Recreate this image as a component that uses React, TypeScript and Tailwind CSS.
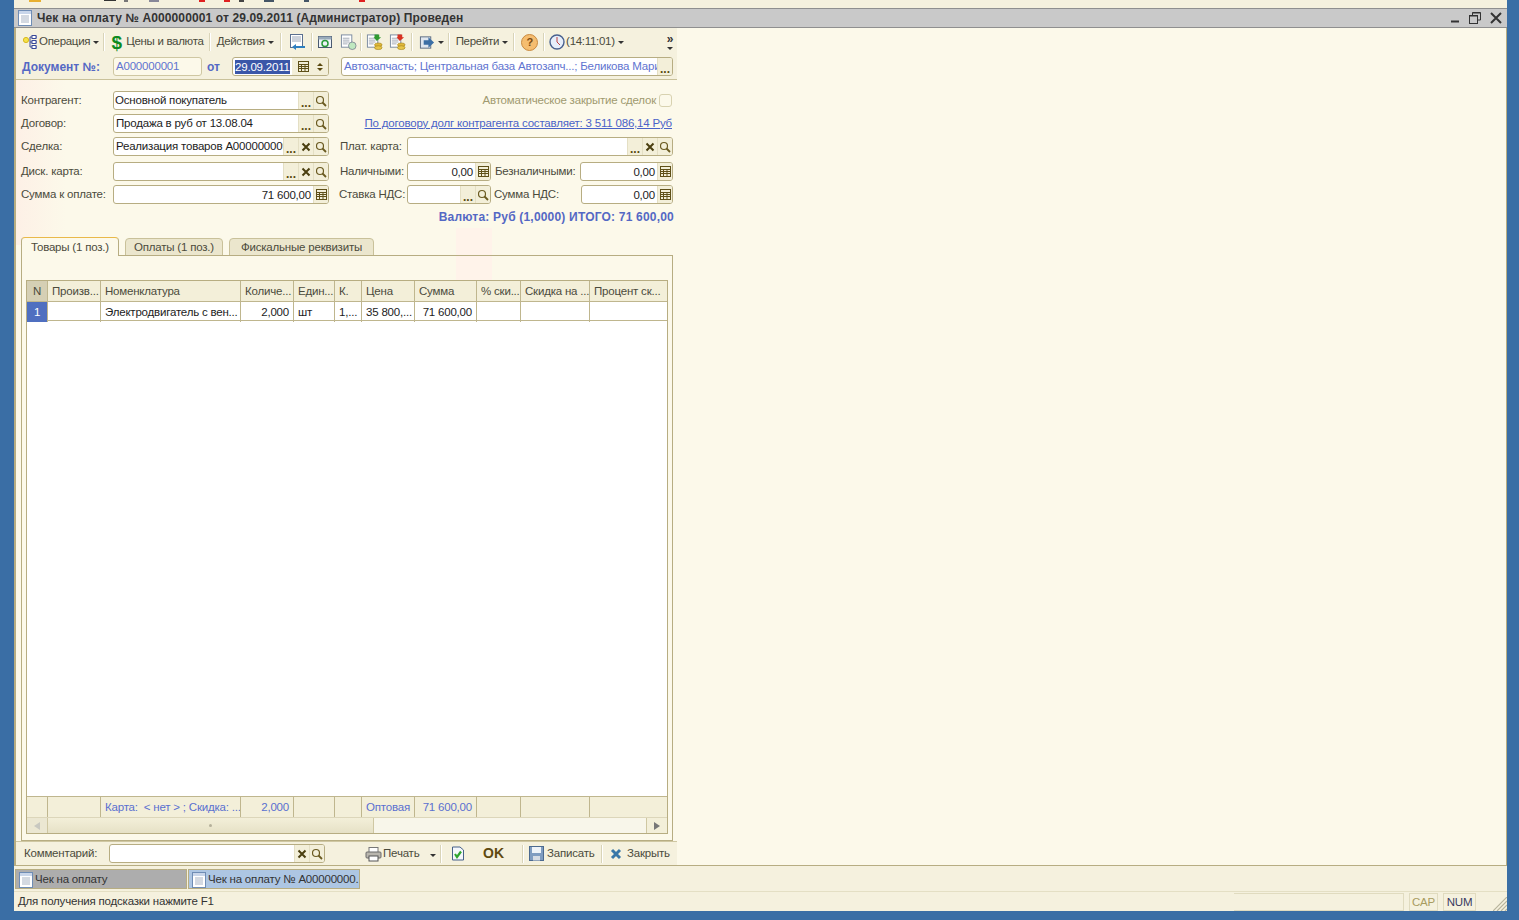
import React from "react";

const font = { fontFamily: '"Liberation Sans", Arial, sans-serif' };

function Dots() {
  return <span className="block w-[13px] text-center text-[12px] font-bold leading-[8px] tracking-[0px] text-[#5a4a10] pt-[5px]">...</span>;
}
function XIcon() {
  return (
    <svg width="10" height="10" viewBox="0 0 10 10">
      <path d="M1.5 1.5 L8.5 8.5 M8.5 1.5 L1.5 8.5" stroke="#4a3f10" strokeWidth="2" />
    </svg>
  );
}
function Lens() {
  return (
    <svg width="12" height="12" viewBox="0 0 12 12" fill="none">
      <circle cx="5" cy="5" r="3.5" stroke="#6a5a20" strokeWidth="1.2" />
      <path d="M7.5 7.5 L11 11" stroke="#6a5a20" strokeWidth="1.8" />
    </svg>
  );
}
function Calc() {
  return (
    <svg width="11" height="11" viewBox="0 0 11 11" fill="none" stroke="#5f5018">
      <rect x="0.5" y="0.5" width="10" height="10" />
      <path d="M0.5 3.5H10.5M0.5 5.5H10.5M0.5 7.5H10.5M3.5 3.5V10.5M7 3.5V10.5" />
    </svg>
  );
}
type Btn = "dots" | "x" | "lens" | "calc";
function Button({ kind }: { kind: Btn }) {
  return (
    <span className="flex h-full w-[15px] shrink-0 items-center justify-center border-l border-[#e4dfc4] bg-[#f3efd9]">
      {kind === "dots" && <Dots />}
      {kind === "x" && <XIcon />}
      {kind === "lens" && <Lens />}
      {kind === "calc" && <Calc />}
    </span>
  );
}
function Field({ w, value, right, buttons, pl = "pl-[2px]", low }: { w: string; value?: string; right?: boolean; buttons: Btn[]; pl?: string; low?: boolean }) {
  return (
    <div className={`${w} flex h-[19px] shrink-0 overflow-hidden rounded-[3px] border border-[#b7ad82] bg-white`}>
      <span className={`min-w-0 flex-1 overflow-hidden whitespace-nowrap text-[11.5px] ${low ? "leading-[19px]" : "leading-[17px]"} text-[#1c1c1c] ${right ? "pr-[2px] text-right" : pl}`}>{value}</span>
      {buttons.map((b, i) => (
        <Button key={i} kind={b} />
      ))}
    </div>
  );
}
function Label({ w, children, low }: { w: string; children: React.ReactNode; low?: boolean }) {
  return <span className={`${w} shrink-0 whitespace-nowrap text-[11.5px] ${low ? "leading-[19px]" : "leading-[17px]"} text-[#4b4b3c]`}>{children}</span>;
}
function Sep({ m = "mx-[4px]" }: { m?: string }) {
  return <span className={`${m} h-[18px] w-[2px] shrink-0 border-l border-r border-l-[#d9d4b8] border-r-white`} />;
}
function Caret() {
  return <span className="ml-[3px] inline-block h-0 w-0 shrink-0 border-x-[3px] border-t-[3px] border-x-transparent border-t-[#333]" />;
}
function DocIcon() {
  return (
    <svg width="14" height="16" viewBox="0 0 14 16" className="shrink-0">
      <rect x="0.5" y="0.5" width="13" height="15" fill="#fff" stroke="#6f8db5" />
      <rect x="1" y="1" width="12" height="3" fill="#c9d6ea" />
      <path d="M3 6H11M3 8H11M3 10H11M3 12H11" stroke="#a9b4c4" />
    </svg>
  );
}
function ToolDoc({ accent, coins, arrow }: { accent: string; coins?: boolean; arrow?: string }) {
  return (
    <svg width="17" height="18" viewBox="0 0 18 18" className="shrink-0">
      <rect x="1.5" y="1.5" width="11" height="13" fill="#fff" stroke="#7a8aa0" />
      <path d="M3 5H10M3 7H10M3 9H10M3 11H8" stroke="#a0a8b5" />
      {arrow && <path d="M9 1H14V4H16L11.5 8L8 4H9Z" fill={arrow} />}
      {coins && <ellipse cx="13" cy="12" rx="4" ry="2" fill="#e0b83a" stroke="#9a7a10" strokeWidth="0.6" />}
      {coins && <ellipse cx="13" cy="15" rx="4" ry="2" fill="#e8c64a" stroke="#9a7a10" strokeWidth="0.6" />}
      {!coins && <circle cx="13" cy="13" r="4" fill={accent} stroke="#557" strokeWidth="0.6" />}
    </svg>
  );
}
function TopToolbar() {
  return (
    <div className="flex h-[26px] items-center pl-[6px] pt-[2px] text-[11.5px] tracking-[-0.3px] text-[#4b4b3c]">
      <svg width="17" height="16" viewBox="0 0 17 16" className="shrink-0">
        <circle cx="4" cy="6" r="2.6" fill="#f5e34a" stroke="#d8b820" />
        <path d="M8 3H15M8 8H15M8 13H15M8 3V13" stroke="#3a4a9a" />
        <rect x="10" y="1.5" width="4" height="3" fill="#fff" stroke="#3a4a9a" />
        <rect x="10" y="6.5" width="4" height="3" fill="#fff" stroke="#3a4a9a" />
        <rect x="10" y="11.5" width="4" height="3" fill="#fff" stroke="#3a4a9a" />
      </svg>
      <span className="whitespace-nowrap">Операция</span>
      <Caret />
      <Sep m="ml-[4px] mr-[4px]" />
      <span className="w-[15px] shrink-0 text-center text-[19px] font-bold leading-none tracking-normal text-[#0d8a1f]">$</span>
      <span className="ml-[2px] whitespace-nowrap">Цены и валюта</span>
      <Sep m="ml-[5px] mr-[6px]" />
      <span className="whitespace-nowrap">Действия</span>
      <Caret />
      <Sep m="ml-[6px] mr-[6px]" />
      <svg width="18" height="18" viewBox="0 0 18 18" className="shrink-0"><rect x="2.5" y="1.5" width="12" height="13" fill="#fff" stroke="#5a6f90" /><path d="M4 4H13M4 6H13M4 8H13" stroke="#9aa5b8" /><path d="M17 13H8V11L4 14L8 17V15H17Z" fill="#2d7fc0" /></svg>
      <Sep m="ml-[5px] mr-[4px]" />
      <svg width="16" height="16" viewBox="0 0 16 16" className="shrink-0"><rect x="1.5" y="2.5" width="13" height="11" fill="#eef3f8" stroke="#4a5a70" /><rect x="1.5" y="2.5" width="13" height="3" fill="#9ab" /><circle cx="8" cy="9.5" r="3" fill="none" stroke="#2a9a3a" strokeWidth="1.5" /></svg>
      <span className="w-[7px] shrink-0" />
      <ToolDoc accent="#bfe8c0" />
      <Sep m="ml-[3px] mr-[4px]" />
      <ToolDoc accent="#e8c64a" coins arrow="#2f9a30" />
      <span className="w-[6px] shrink-0" />
      <ToolDoc accent="#e8c64a" coins arrow="#d83020" />
      <Sep m="ml-[5px] mr-[6px]" />
      <svg width="16" height="17" viewBox="0 0 17 17" className="shrink-0"><rect x="1.5" y="2.5" width="11" height="12" fill="#dfe6ef" stroke="#5a6a80" /><path d="M5 6H10V3L16 8.5L10 14V11H5Z" fill="#3b6ea5" /></svg>
      <Caret />
      <Sep m="ml-[4px] mr-[6px]" />
      <span className="whitespace-nowrap">Перейти</span>
      <Caret />
      <Sep m="ml-[5px] mr-[6px]" />
      <span className="flex h-[17px] w-[17px] shrink-0 items-center justify-center rounded-full border border-[#c98a40] bg-[#f5bd70] text-[11px] font-bold text-[#7a4a10]">?</span>
      <Sep m="ml-[5px] mr-[4px]" />
      <svg width="16" height="16" viewBox="0 0 16 16" className="shrink-0"><circle cx="8" cy="8" r="7" fill="#e6eefa" stroke="#48608f" strokeWidth="1.4" /><path d="M8 3V8L11 11" stroke="#c04040" fill="none" /></svg>
      <span className="ml-[1px] whitespace-nowrap">(14:11:01)</span>
      <Caret />
      <div className="ml-auto mr-[3px] flex w-[8px] flex-col items-center">
        <span className="text-[12px] font-bold leading-[10px] text-[#333]">»</span>
        <span className="mt-[3px] h-0 w-0 border-x-[3px] border-t-[3px] border-x-transparent border-t-[#333]" />
      </div>
    </div>
  );
}
const cols = "grid grid-cols-[21px_53px_140px_53px_41px_27px_53px_62px_44px_69px_78px]";
function Cell({ children, bg = "", right, blue, pad = "px-[4px]" }: { children?: React.ReactNode; bg?: string; right?: boolean; blue?: boolean; pad?: string }) {
  return (
    <div className={`overflow-hidden whitespace-nowrap border-r border-[#bfb68e] ${pad} text-[11.5px] leading-[21px] last:border-r-0 ${bg} ${right ? "text-right" : ""} ${blue ? "text-[#5a6fd0]" : ""}`}>{children}</div>
  );
}
export default function App() {
  const headers = ["Произв...", "Номенклатура", "Количе...", "Един...", "К.", "Цена", "Сумма", "% ски...", "Скидка на ...", "Процент ск..."];
  return (
    <div style={font} className="flex h-[920px] w-[1519px] flex-col overflow-hidden bg-[#3a6ea5] tracking-[-0.2px] text-[#1c1c1c]">
      <div className="ml-[14px] flex h-[911px] w-[1493px] flex-col bg-[#f5f1de]">
        <div className="flex h-[8px] shrink-0 items-start">
          <svg width="400" height="4" viewBox="0 0 400 4">
            <rect x="15" width="12" height="2" fill="#e8b030" />
            <rect x="90" width="12" height="1" fill="#333" />
            <rect x="110" width="4" height="2" fill="#777" />
            <rect x="135" width="10" height="2" fill="#889" />
            <rect x="185" width="6" height="2" fill="#e02020" />
            <rect x="210" width="6" height="2" fill="#e02020" />
            <rect x="225" width="5" height="2" fill="#444" />
            <rect x="250" width="10" height="2" fill="#456" />
            <rect x="290" width="5" height="2" fill="#456" />
            <rect x="345" width="6" height="2" fill="#e02020" />
          </svg>
        </div>
        {/* window title */}
        <div className="flex h-[20px] shrink-0 items-center border-y border-y-[#8f8f8f] bg-[#c9c9c9] pl-[4px] pr-[3px]">
          <DocIcon />
          <span className="ml-[5px] whitespace-nowrap text-[12px] font-bold tracking-[0.12px] text-[#333]">Чек на оплату № А000000001 от 29.09.2011 (Администратор) Проведен</span>
          <div className="ml-auto flex items-center gap-[9px] pr-[2px]">
            <svg width="9" height="10" viewBox="0 0 9 10"><path d="M0 8.5H8" stroke="#333" strokeWidth="2" /></svg>
            <svg width="12" height="12" viewBox="0 0 12 12" fill="none" stroke="#333"><rect x="0.5" y="3.5" width="8" height="8" strokeWidth="1" /><path d="M3.5 3V0.5H11.5V8H9" /><path d="M0.5 4H8.5M3.5 1H11.5" /></svg>
            <svg width="12" height="12" viewBox="0 0 12 12"><path d="M1 1L11 11M11 1L1 11" stroke="#333" strokeWidth="2" /></svg>
          </div>
        </div>
        {/* window body */}
        <div className="relative flex h-[838px] shrink-0 border-b border-l-2 border-r border-[#b7ad82] bg-[#fcf9ea]">
          <div className="pointer-events-none absolute left-0 top-[52px] h-[165px] w-[50px] bg-gradient-to-r from-[#fdf0e6] to-transparent" />
          <div className="pointer-events-none absolute left-[440px] top-[200px] h-[60px] w-[36px] bg-[#fff3ea]" />
          <div className="relative flex w-[661px] shrink-0 flex-col">
            <div className="bg-[#f5f1de]">
              <TopToolbar />
              <div className="flex h-[26px] items-center border-b border-[#c9c19a] pl-[6px]">
                <span className="w-[91px] shrink-0 text-[12px] font-bold tracking-normal text-[#5468c4]">Документ №:</span>
                <div className="h-[19px] w-[89px] shrink-0 rounded-[3px] border border-[#cfc7a2] bg-[#fcf9ea] pl-[2px] text-[11.5px] leading-[17px] text-[#5f74d0]">А000000001</div>
                <span className="w-[30px] shrink-0 pl-[5px] text-[12px] font-bold tracking-normal text-[#5468c4]">от</span>
                <div className="flex h-[19px] w-[97px] shrink-0 items-center overflow-hidden rounded-[3px] border border-[#b7ad82] bg-white pl-[2px]">
                  <span className="bg-[#3a56a8] text-[11.5px] leading-[14px] text-white">29.09.2011</span>
                  <span className="ml-auto flex h-full w-[36px] items-center justify-center gap-[8px] bg-[#f3efd9]">
                    <Calc />
                    <span className="flex flex-col gap-[2px]">
                      <span className="h-0 w-0 border-x-[3px] border-b-[3px] border-x-transparent border-b-[#5a4a10]" />
                      <span className="h-0 w-0 border-x-[3px] border-t-[3px] border-x-transparent border-t-[#5a4a10]" />
                    </span>
                  </span>
                </div>
                <div className="ml-[12px] flex h-[19px] w-[332px] shrink-0 overflow-hidden rounded-[3px] border border-[#b7ad82] bg-white">
                  <span className="min-w-0 flex-1 overflow-hidden whitespace-nowrap pl-[2px] text-[11.5px] leading-[17px] text-[#5f74d0]">Автозапчасть; Центральная база Автозапч...; Беликова Мария</span>
                  <Button kind="dots" />
                </div>
              </div>
            </div>
            <div className="relative flex flex-col bg-transparent pl-[5px] pt-[11px]">
              <div className="flex h-[19px] items-center">
                <Label w="w-[92px]">Контрагент:</Label>
                <Field w="w-[216px]" value="Основной покупатель" buttons={["dots", "lens"]} pl="pl-[1px]" />
                <span className="w-[327px] shrink-0 whitespace-nowrap text-right text-[11.5px] text-[#a09a70]">Автоматическое закрытие сделок</span>
                <span className="ml-[3px] h-[13px] w-[13px] shrink-0 rounded-[3px] border border-[#d8d2b0] bg-[#fcf9ea]" />
              </div>
              <div className="mt-[4px] flex h-[19px] items-center">
                <Label w="w-[92px]">Договор:</Label>
                <Field w="w-[216px]" value="Продажа в руб от 13.08.04" buttons={["dots", "lens"]} />
                <a className="w-[343px] shrink-0 whitespace-nowrap text-right text-[11.5px] text-[#4a62c8] underline">По договору долг контрагента составляет: 3 511 086,14 Руб</a>
              </div>
              <div className="mt-[4px] flex h-[19px] items-center">
                <Label w="w-[92px]">Сделка:</Label>
                <Field w="w-[216px]" value="Реализация товаров А000000009" buttons={["dots", "x", "lens"]} />
                <span className="w-[11px] shrink-0" />
                <Label w="w-[67px]">Плат. карта:</Label>
                <Field w="w-[266px]" buttons={["dots", "x", "lens"]} />
              </div>
              <div className="mt-[6px] flex h-[19px] items-center">
                <Label low w="w-[92px]">Диск. карта:</Label>
                <Field w="w-[216px]" buttons={["dots", "x", "lens"]} />
                <span className="w-[11px] shrink-0" />
                <Label low w="w-[67px]">Наличными:</Label>
                <Field low w="w-[84px]" value="0,00" right buttons={["calc"]} />
                <span className="w-[4px] shrink-0" />
                <Label low w="w-[85px]">Безналичными:</Label>
                <Field low w="w-[93px]" value="0,00" right buttons={["calc"]} />
              </div>
              <div className="mt-[4px] flex h-[19px] items-center">
                <Label low w="w-[92px]">Сумма к оплате:</Label>
                <Field low w="w-[216px]" value="71 600,00" right buttons={["calc"]} />
                <span className="w-[10px] shrink-0" />
                <Label low w="w-[68px]">Ставка НДС:</Label>
                <Field w="w-[84px]" buttons={["dots", "lens"]} />
                <span className="w-[3px] shrink-0" />
                <Label low w="w-[87px]">Сумма НДС:</Label>
                <Field low w="w-[92px]" value="0,00" right buttons={["calc"]} />
              </div>
              <div className="mt-[5px] h-[16px] w-[653px] whitespace-nowrap text-right text-[12px] font-bold leading-[16px] tracking-[0.2px] text-[#5468c4]">Валюта: Руб (1,0000) ИТОГО: 71 600,00</div>
              {/* tabs */}
              <div className="mt-[12px] flex h-[19px] items-end gap-[6px] text-[11.5px]">
                <div className="relative z-10 h-[19px] w-[98px] rounded-t-[4px] border border-b-0 border-[#b7ad82] border-t-[#e9b94a] bg-[#fcf9ea] text-center leading-[18px] text-[#4b4b3c]">Товары (1 поз.)</div>
                <div className="h-[18px] w-[98px] rounded-t-[4px] border border-[#c9c19a] bg-[#ebe6cd] text-center leading-[17px] text-[#4b4b3c]">Оплаты (1 поз.)</div>
                <div className="h-[18px] w-[145px] rounded-t-[4px] border border-[#c9c19a] bg-[#ebe6cd] text-center leading-[17px] text-[#4b4b3c]">Фискальные реквизиты</div>
              </div>
              <div className="-mt-px flex h-[586px] w-[652px] flex-col border border-[#b7ad82] pb-[6px] pl-[4px] pr-[4px] pt-[24px]">
                <div className="flex h-full flex-col border border-[#b7ad82] bg-white">
                  <div className={`${cols} h-[21px] shrink-0 border-b border-[#bfb68e] bg-[#f3efd9] text-[#4b4b3c]`}>
                    <Cell bg="bg-[#d5cfb4]" pad="text-center">N</Cell>
                    {headers.map((h) => (
                      <Cell key={h}>{h}</Cell>
                    ))}
                  </div>
                  <div className={`${cols} h-[19px] shrink-0 border-b border-[#bfb68e] text-[#1c1c1c]`}>
                    <div className="border-r border-[#bfb68e] bg-[#4f6fc0] text-center text-[11.5px] leading-[20px] text-white">1</div>
                    <Cell />
                    <Cell>Электродвигатель с вен...</Cell>
                    <Cell right>2,000</Cell>
                    <Cell>шт</Cell>
                    <Cell right>1,...</Cell>
                    <Cell right>35 800,...</Cell>
                    <Cell right>71 600,00</Cell>
                    <Cell />
                    <Cell />
                    <Cell />
                  </div>
                  <div className="flex-1" />
                  <div className={`${cols} h-[21px] shrink-0 border-t border-[#bfb68e] bg-[#f3efd9]`}>
                    <Cell />
                    <Cell />
                    <Cell blue>Карта:&nbsp; &lt; нет &gt; ; Скидка: ...</Cell>
                    <Cell right blue>2,000</Cell>
                    <Cell />
                    <Cell />
                    <Cell blue>Оптовая</Cell>
                    <Cell right blue>71 600,00</Cell>
                    <Cell />
                    <Cell />
                    <Cell />
                  </div>
                  <div className="flex h-[16px] shrink-0 items-stretch border-t border-[#dcd6ba] bg-[#f8f6ea]">
                    <div className="flex w-[21px] items-center justify-center border-r border-[#cfc7a2] bg-[#ebe7d2]">
                      <span className="h-0 w-0 border-y-[4px] border-r-[6px] border-y-transparent border-r-[#c8c8c0]" />
                    </div>
                    <div className="flex w-[326px] items-center justify-center border-r border-[#cfc7a2] bg-gradient-to-b from-[#f3efd9] to-[#e6e1c6]">
                      <span className="h-[3px] w-[3px] rounded-full bg-[#b5b09a]" />
                    </div>
                    <div className="flex-1" />
                    <div className="flex w-[21px] items-center justify-center border-l border-[#cfc7a2] bg-[#f3efd9]">
                      <span className="h-0 w-0 border-y-[4px] border-l-[6px] border-y-transparent border-l-[#777]" />
                    </div>
                  </div>
                </div>
              </div>
            </div>
            {/* bottom toolbar */}
            <div className="flex h-[25px] items-center border-t border-[#cfc7a2] bg-[#f5f1de] pl-[8px] text-[11.5px] text-[#4b4b3c]">
              <span className="w-[85px] shrink-0 pt-[1px]">Комментарий:</span>
              <Field w="w-[216px]" buttons={["x", "lens"]} />
              <svg width="17" height="16" viewBox="0 0 17 16" className="ml-[40px] shrink-0"><rect x="4" y="1.5" width="9" height="5" fill="#fff" stroke="#777" /><rect x="1" y="6" width="15" height="6" rx="1" fill="#b9b6ae" stroke="#6a6a6a" /><rect x="4" y="10" width="9" height="5" fill="#fff" stroke="#555" /></svg>
              <span className="ml-[1px] w-[44px] shrink-0 whitespace-nowrap pt-[1px]">Печать</span>
              <span className="w-[9px] shrink-0"><Caret /></span>
              <Sep m="ml-[4px] mr-[9px]" />
              <svg width="14" height="15" viewBox="0 0 14 15" className="shrink-0"><path d="M1.5 1H9L12.5 4V14H1.5Z" fill="#f4f7fb" stroke="#46618a" /><path d="M4 8L6 11L10 5.5" stroke="#2fa52f" strokeWidth="2.2" fill="none" /></svg>
              <span className="ml-[18px] w-[39px] shrink-0 text-[14px] font-bold tracking-normal text-[#5f4a10]">OK</span>
              <Sep m="mr-[5px]" />
              <svg width="15" height="15" viewBox="0 0 15 15" className="shrink-0"><rect x="0.5" y="0.5" width="14" height="14" fill="#7f9cc0" stroke="#4c6a90" /><rect x="3" y="1" width="9" height="6" fill="#eef3f8" /><rect x="4" y="10" width="7" height="4.5" fill="#d5dbe3" /></svg>
              <span className="ml-[3px] w-[47px] shrink-0 whitespace-nowrap pt-[1px]">Записать</span>
              <Sep m="ml-[7px] mr-[7px]" />
              <svg width="12" height="12" viewBox="0 0 12 12" className="shrink-0"><path d="M2 2L10 10M10 2L2 10" stroke="#3a78a8" strokeWidth="3" /></svg>
              <span className="ml-[5px] whitespace-nowrap pt-[1px]">Закрыть</span>
            </div>
          </div>
        </div>
        {/* task bar */}
        <div className="mt-[3px] flex h-[20px] shrink-0 gap-px pl-[1px] text-[11.5px]">
          <div className="flex w-[172px] items-center border border-[#b7ad82] bg-[#adadad] pl-[3px] pt-[1px] text-[#333]">
            <DocIcon />
            <span className="ml-[2px] whitespace-nowrap">Чек на оплату</span>
          </div>
          <div className="flex w-[172px] items-center overflow-hidden whitespace-nowrap border border-[#b7ad82] bg-[#adc6e3] pl-[3px] pt-[1px] text-[#333]">
            <DocIcon />
            <span className="ml-[2px] whitespace-nowrap">Чек на оплату № А00000000...</span>
          </div>
        </div>
        {/* status bar */}
        <div className="relative mt-[2px] flex h-[20px] shrink-0 items-center border-t border-[#e4dfc4] pl-[4px] pr-[31px] text-[11.5px]">
          <span className="whitespace-nowrap text-[#333]">Для получения подсказки нажмите F1</span>
          <div className="ml-auto flex items-center">
            <span className="h-[18px] w-[170px] border-y border-r border-[#e0dbbf]" />
            <span className="ml-[5px] h-[18px] w-[29px] border border-[#e0dbbf] text-center leading-[16px] text-[#a89c60]">CAP</span>
            <span className="ml-[5px] h-[18px] w-[33px] border border-[#e0dbbf] text-center leading-[16px] text-[#3a3a60]">NUM</span>
          </div>
          <svg width="14" height="14" viewBox="0 0 14 14" className="absolute bottom-0 right-0">
            <path d="M0 14L14 0M4 14L14 4M8 14L14 8M12 14L14 12" stroke="#b8b49c" strokeWidth="1.2" />
          </svg>
        </div>
      </div>
    </div>
  );
}
